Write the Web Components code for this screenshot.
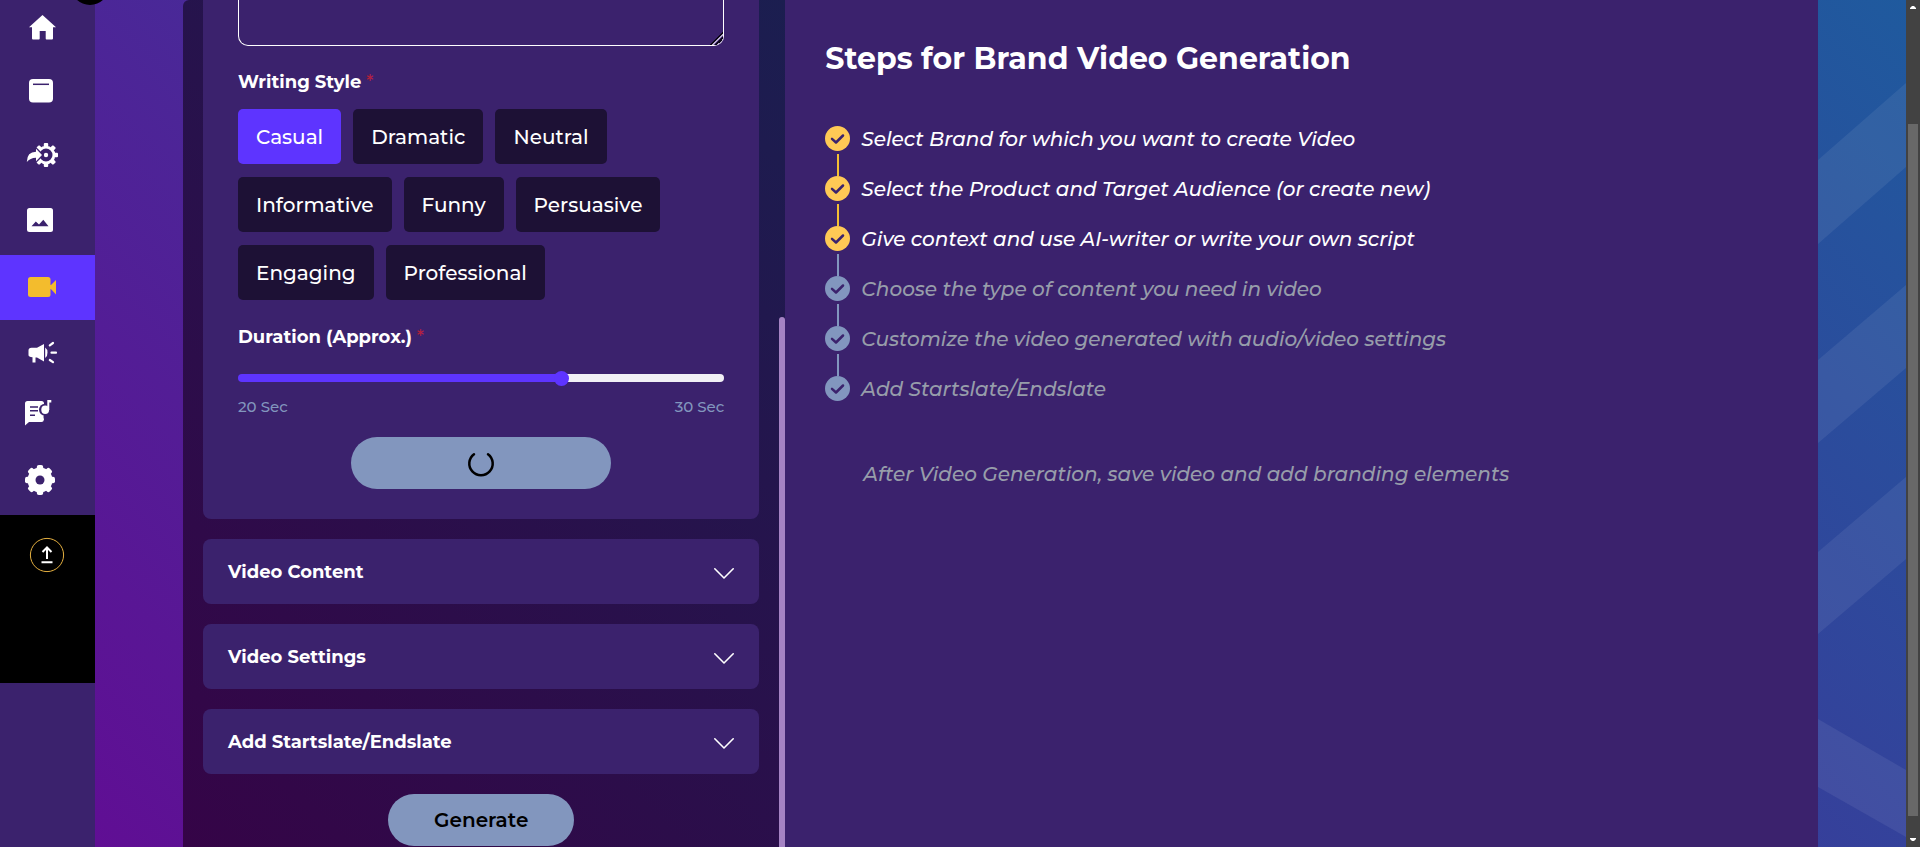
<!DOCTYPE html>
<html lang="en">
<head>
<meta charset="utf-8">
<title>Brand Video Generation</title>
<style>
  html, body { margin: 0; }
  body {
    font-family: Montserrat, Inter, "Noto Sans", sans-serif;
    color: #fff;
    background: #424242;
    --surface: #3b226d;
    --accent: #5e34ff;
    --muted: #8296be;
    --gold: #ffc955;
    --chip: #1d1135;
  }
</style>
</head>
<body>
<video-app></video-app>

<script>
function define(name, html, setup) {
  const template = document.createElement('template');
  template.innerHTML = html;
  customElements.define(name, class extends HTMLElement {
    constructor() {
      super();
      this.attachShadow({ mode: 'open' }).append(template.content.cloneNode(true));
    }
    connectedCallback() {
      if (setup && !this.ready) { this.ready = true; setup(this, this.shadowRoot); }
    }
  });
}

/* Sidebar entry: the icon is slotted in */
define('nav-item', `
  <style>
    :host { display: block; height: 65px; color: #fff; }
    :host([active]) { background: var(--accent); color: #f3bc2d; }
    a { display: flex; align-items: center; height: 100%; padding-left: 22px; color: inherit; }
  </style>
  <a href="#"><slot></slot></a>`, (host, root) => {
  root.querySelector('a').setAttribute('aria-label', host.getAttribute('label'));
});

const teeth = (cx, cy, w, r0, r1, rx) => [0, 45, 90, 135, 180, 225, 270, 315].map(a =>
  `<rect x="${cx - w / 2}" y="${cy - r1}" width="${w}" height="${r1 - r0}" rx="${rx}" transform="rotate(${a} ${cx} ${cy})"/>`).join('');

define('side-bar', `
  <style>
    :host { display: block; position: relative; background: var(--surface); overflow: hidden; }
    nav { margin-top: -5px; }
    svg { display: block; width: 41px; height: 41px; fill: currentColor; }
    .cut { fill: var(--surface); }
    .cutline { stroke: var(--surface); fill: none; }
    .upload { height: 168px; background: #000; display: flex; justify-content: center; align-items: flex-start; padding: 22px 1px 0 0; box-sizing: border-box; }
    .upload button { border: 0; padding: 0; background: none; color: #fff; }
    .upload svg { width: 36px; height: 36px; fill: none; stroke: #fff; }
  </style>
  <nav>
    <nav-item label="Home"><svg viewBox="0 0 41 41"><path d="M20.5 8 34 20.300H31V31.500q0 1-1 1H24.500q-.8 0-.8-1V24h-6v7.500q0 1-.8 1H11q-1 0-1-1V20.300H7z"/></svg></nav-item>
    <nav-item label="Library"><svg viewBox="0 0 41 41"><rect x="7" y="7" width="24" height="23.500" rx="4"/><path class="cutline" stroke-width="1.500" d="M11 12.300H27"/></svg></nav-item>
    <nav-item label="Integrations"><svg viewBox="0 0 41 41"><path fill-rule="evenodd" d="M24 8.700a9.300 9.300 0 1 0 0 18.600a9.300 9.300 0 1 0 0-18.600zm0 2.800a6.500 6.500 0 1 1 0 13a6.500 6.500 0 1 1 0-13z"/>${teeth(24, 18, 4.4, 8, 12, 1)}<circle cx="24" cy="18" r="2.200"/><path class="cut" stroke="#3b226d" stroke-width="3" d="M5 24.500Q6 14.800 14 14.800V12L20 18l-6 6v-3.200Q8.500 20.800 5 24.500z"/><path d="M4.800 25Q5 14.800 14 14.800V11.800L20 18l-6 6.200v-3.400Q8 21 4.800 25z"/></svg></nav-item>
    <nav-item label="Images"><svg viewBox="0 0 41 41"><rect x="5" y="6" width="26" height="24" rx="2.500"/><path class="cut" d="M9.500 24.200 13.800 19.500 17 22.500 21.300 17.800 26.500 24.200z"/></svg></nav-item>
    <nav-item label="Videos" active><svg viewBox="0 0 41 41"><rect x="6" y="10" width="22.500" height="20" rx="2.500"/><path d="M27 20 34 13V27.500z"/><path d="M28 18h2v4h-2z"/></svg></nav-item>
    <nav-item label="Campaigns"><svg viewBox="0 0 41 41"><path d="M22 12v17.500L15 25.500H13.500V30.500h-3V25.300Q6.500 25 6.500 23V18.500Q6.500 15.800 9.500 15.800H15z"/><path d="M23.200 15.500Q25.500 17 25.500 20.700 25.500 24.500 23.200 26z"/><path d="M27.800 13.300 31 11M29.500 20.700h4.500M27.800 28 31 30.200" stroke="currentColor" stroke-width="2.200" stroke-linecap="round"/></svg></nav-item>
    <nav-item label="Scripts and audio"><svg viewBox="0 0 41 41"><path d="M3 6.500Q3 4 5.500 4H19.500Q22 4 22 6.500V16.500Q21 20 22 22.500 21.500 25 19.500 25H7L3 28.500z"/><path class="cutline" stroke-width="1.500" d="M8 10h8M8 13.800h8M8 18.200h5"/><circle class="cut" cx="23" cy="12.800" r="6"/><path d="M25.300 3h4v2.400h-2V13h-2z"/><ellipse cx="23.200" cy="12.800" rx="3.900" ry="4.200"/></svg></nav-item>
    <nav-item label="Settings"><svg viewBox="0 0 41 41"><circle cx="18" cy="18" r="12.500"/>${teeth(18, 18, 6.4, 8, 15, 2)}<circle class="cut" cx="18" cy="18" r="4.500"/></svg></nav-item>
  </nav>
  <div class="upload">
    <button aria-label="Upload"><svg viewBox="0 0 36 36"><circle cx="18" cy="18" r="16.600" stroke="#e5b040" stroke-width="1"/><path d="M18 22V11M13.500 15 18 10.500 22.500 15M12.500 25.300h11" stroke-width="2"/></svg></button>
  </div>`);

/* Bold caption of a form field; "required" adds the red star */
define('field-caption', `
  <style>
    :host { display: block; font-size: 18px; line-height: 24px; font-weight: 700; }
    span { display: none; color: #b3203f; font-weight: 500; }
    :host([required]) span { display: inline; }
  </style>
  <slot></slot><span> *</span>`);

define('style-chip', `
  <style>
    :host { display: block; }
    button {
      display: block; height: 55px; padding: 0 18px; border: 0; border-radius: 5px;
      background: var(--chip); color: #fff; font: 500 20px/24px Montserrat, Inter, sans-serif;
    }
    :host([selected]) button { background: var(--accent); }
  </style>
  <button type="button"><slot></slot></button>`, (host, root) => {
  root.querySelector('button').setAttribute('aria-pressed', host.hasAttribute('selected'));
});

define('pill-button', `
  <style>
    :host { display: flex; justify-content: center; }
    button {
      display: flex; align-items: center; justify-content: center;
      height: 52px; padding: 0 46px; border: 0; border-radius: 26px;
      background: var(--muted); color: #000; font: 600 20px/24px Montserrat, Inter, sans-serif;
    }
    :host([wide]) button { width: 260px; }
  </style>
  <button type="button"><slot></slot></button>`);

define('duration-slider', `
  <style>
    :host { display: block; }
    label { display: block; }
    input {
      appearance: none; display: block; width: 100%; height: 8px; margin: 25px 0 0; border-radius: 4px;
      background: linear-gradient(90deg, var(--accent) 67%, #f1f0f5 67%);
    }
    input::-webkit-slider-thumb { appearance: none; width: 15px; height: 15px; border-radius: 50%; background: var(--accent); }
    .ends { display: flex; justify-content: space-between; margin-top: 15px; font-size: 15px; line-height: 20px; font-weight: 500; color: var(--muted); }
  </style>
  <label for="seconds"><field-caption required>Duration (Approx.)</field-caption></label>
  <input id="seconds" type="range" min="20" max="30" step="any" value="26.7">
  <div class="ends"><span>20 Sec</span><span>30 Sec</span></div>`);

define('accordion-row', `
  <style>
    :host { display: block; }
    button {
      display: flex; align-items: center; justify-content: space-between;
      width: 100%; height: 65px; padding: 0 25px; border: 0; border-radius: 8px;
      background: var(--surface); color: #fff; font: 700 18px/24px Montserrat, Inter, sans-serif;
    }
    svg { width: 20px; height: 14px; fill: none; stroke: #fff; stroke-width: 1.600; stroke-linecap: round; stroke-linejoin: round; }
  </style>
  <button type="button" aria-expanded="false"><slot></slot>
    <svg viewBox="0 0 20 14"><path d="M0.800 3.800 10 13 19.200 3.800"/></svg></button>`);

define('script-card', `
  <style>
    :host { display: block; padding: 0 35px 30px; background: var(--surface); border-radius: 0 0 8px 8px; }
    textarea {
      display: block; box-sizing: border-box; width: 100%; height: 46px; margin: 0; padding: 8px 12px;
      border: 1px solid #fff; border-top: 0; border-radius: 0 0 10px 10px; background: transparent;
      color: #fff; font: inherit; resize: vertical;
    }
    textarea::-webkit-resizer {
      background: linear-gradient(135deg, transparent 55%, #0c0718 55% 62%, #b9adcf 62% 69%, transparent 69% 73%, #0c0718 73% 80%, #b9adcf 80% 86%, transparent 86%);
    }
    field-caption { margin-top: 24px; }
    .chips { display: flex; flex-wrap: wrap; gap: 13px 12px; margin: 15px 0 25px; }
    pill-button { margin-top: 20px; }
    svg { width: 28px; height: 28px; fill: none; stroke: #000; stroke-width: 2.500; stroke-linecap: round; }
  </style>
  <textarea aria-label="Context"></textarea>
  <field-caption required id="style">Writing Style</field-caption>
  <div class="chips" role="group" aria-labelledby="style">
    <style-chip selected>Casual</style-chip>
    <style-chip>Dramatic</style-chip>
    <style-chip>Neutral</style-chip>
    <style-chip>Informative</style-chip>
    <style-chip>Funny</style-chip>
    <style-chip>Persuasive</style-chip>
    <style-chip>Engaging</style-chip>
    <style-chip>Professional</style-chip>
  </div>
  <duration-slider></duration-slider>
  <pill-button wide><svg viewBox="0 0 28 28" role="img" aria-label="Loading"><path d="M7 5.200A11.700 11.700 0 1 0 21 5.200"/></svg></pill-button>`);

define('form-panel', `
  <style>
    :host {
      display: grid; grid-template-columns: 1fr 6px; border-top-left-radius: 6px; min-width: 0;
      background: linear-gradient(45deg, #350447, #1b1e50);
    }
    .stack { display: flex; flex-direction: column; gap: 20px; padding: 0 20px; }
    .thumb { margin-top: 317px; border-radius: 3px 3px 0 0; background: #a583c4; }
  </style>
  <div class="stack">
    <script-card></script-card>
    <accordion-row>Video Content</accordion-row>
    <accordion-row>Video Settings</accordion-row>
    <accordion-row>Add Startslate/Endslate</accordion-row>
    <pill-button>Generate</pill-button>
  </div>
  <div class="thumb"></div>`);

define('step-item', `
  <style>
    :host { display: flex; align-items: flex-start; gap: 11px; height: 50px; color: #979daa; --dot: var(--muted); --line: var(--muted); }
    :host([done]) { color: #fff; --dot: var(--gold); --line: #f5be33; }
    :host([next-todo]) { --line: var(--muted); }
    .mark { display: flex; flex-direction: column; align-items: center; gap: 3px; height: 50px; }
    svg { width: 25px; height: 25px; fill: none; stroke: var(--surface); stroke-width: 2.500; stroke-linecap: round; stroke-linejoin: round; }
    circle { fill: var(--dot); stroke: none; }
    i { flex: 1; width: 2px; background: var(--line); }
    :host([last]), :host([last]) .mark { height: 25px; }
    :host([last]) i { display: none; }
    span { font: italic 500 20px/27px Montserrat, Inter, sans-serif; }
  </style>
  <div class="mark"><svg viewBox="0 0 25 25"><circle cx="12.500" cy="12.500" r="12.500"/><path d="M7 12.800 11 16.500 18 9.500"/></svg><i></i></div>
  <span><slot></slot></span>`);

define('steps-panel', `
  <style>
    :host { display: block; padding: 40px; background: var(--surface); min-width: 0; }
    h1 { margin: 0 0 48px; font-size: 30px; line-height: 38px; font-weight: 700; }
    p { margin: 61px 0 0 38px; color: #979daa; font: italic 500 20px/25px Montserrat, Inter, sans-serif; }
  </style>
  <h1>Steps for Brand Video Generation</h1>
  <div role="list">
    <step-item role="listitem" done>Select Brand for which you want to create Video</step-item>
    <step-item role="listitem" done>Select the Product and Target Audience (or create new)</step-item>
    <step-item role="listitem" done next-todo>Give context and use AI-writer or write your own script</step-item>
    <step-item role="listitem">Choose the type of content you need in video</step-item>
    <step-item role="listitem">Customize the video generated with audio/video settings</step-item>
    <step-item role="listitem" last>Add Startslate/Endslate</step-item>
  </div>
  <p>After Video Generation, save video and add branding elements</p>`);

/* Slanted light bands behind the right edge of the page */
define('page-bands', `
  <style>
    :host { display: block; overflow: hidden; }
    svg { display: block; width: 88px; height: 847px; fill: #fff; fill-opacity: .07; }
  </style>
  <svg viewBox="0 0 88 847" aria-hidden="true">
    <path d="M0 160 88 83V167L0 244zM0 360 88 285V368L0 443zM0 552 88 477V559L0 634zM0 719 88 770V837L0 787z"/>
  </svg>`);

define('page-scrollbar', `
  <style>
    :host { display: flex; flex-direction: column; align-items: center; gap: 4px; padding: 6px 0; background: #424242; }
    svg { width: 6px; height: 3px; fill: #fff; }
    div { flex: 1; width: 10px; margin: 111px 0 18px; background: #686868; }
  </style>
  <svg viewBox="0 0 6 3"><path d="M0 3V2L2 0H4L6 2V3z"/></svg>
  <div></div>
  <svg viewBox="0 0 6 3"><path d="M0 0V1L2 3H4L6 1V0z"/></svg>`);

define('video-app', `
  <style>
    :host { display: grid; grid-template-columns: 95px 1fr 14px; min-height: 100vh; position: relative; overflow: hidden; }
    main {
      display: grid; grid-template-columns: 88px minmax(0, 7fr) minmax(0, 12fr) 88px;
      background: linear-gradient(45deg, #600e94, #1f5a9e);
    }
    form-panel { grid-column: 2; }
    .toggle { position: absolute; left: 71px; top: -33px; width: 38px; height: 38px; padding: 0; border: 0; border-radius: 50%; background: #000; }
  </style>
  <side-bar></side-bar>
  <main>
    <form-panel></form-panel>
    <steps-panel></steps-panel>
    <page-bands></page-bands>
  </main>
  <page-scrollbar></page-scrollbar>
  <button class="toggle" aria-label="Collapse sidebar"></button>`);
</script>
</body>
</html>
